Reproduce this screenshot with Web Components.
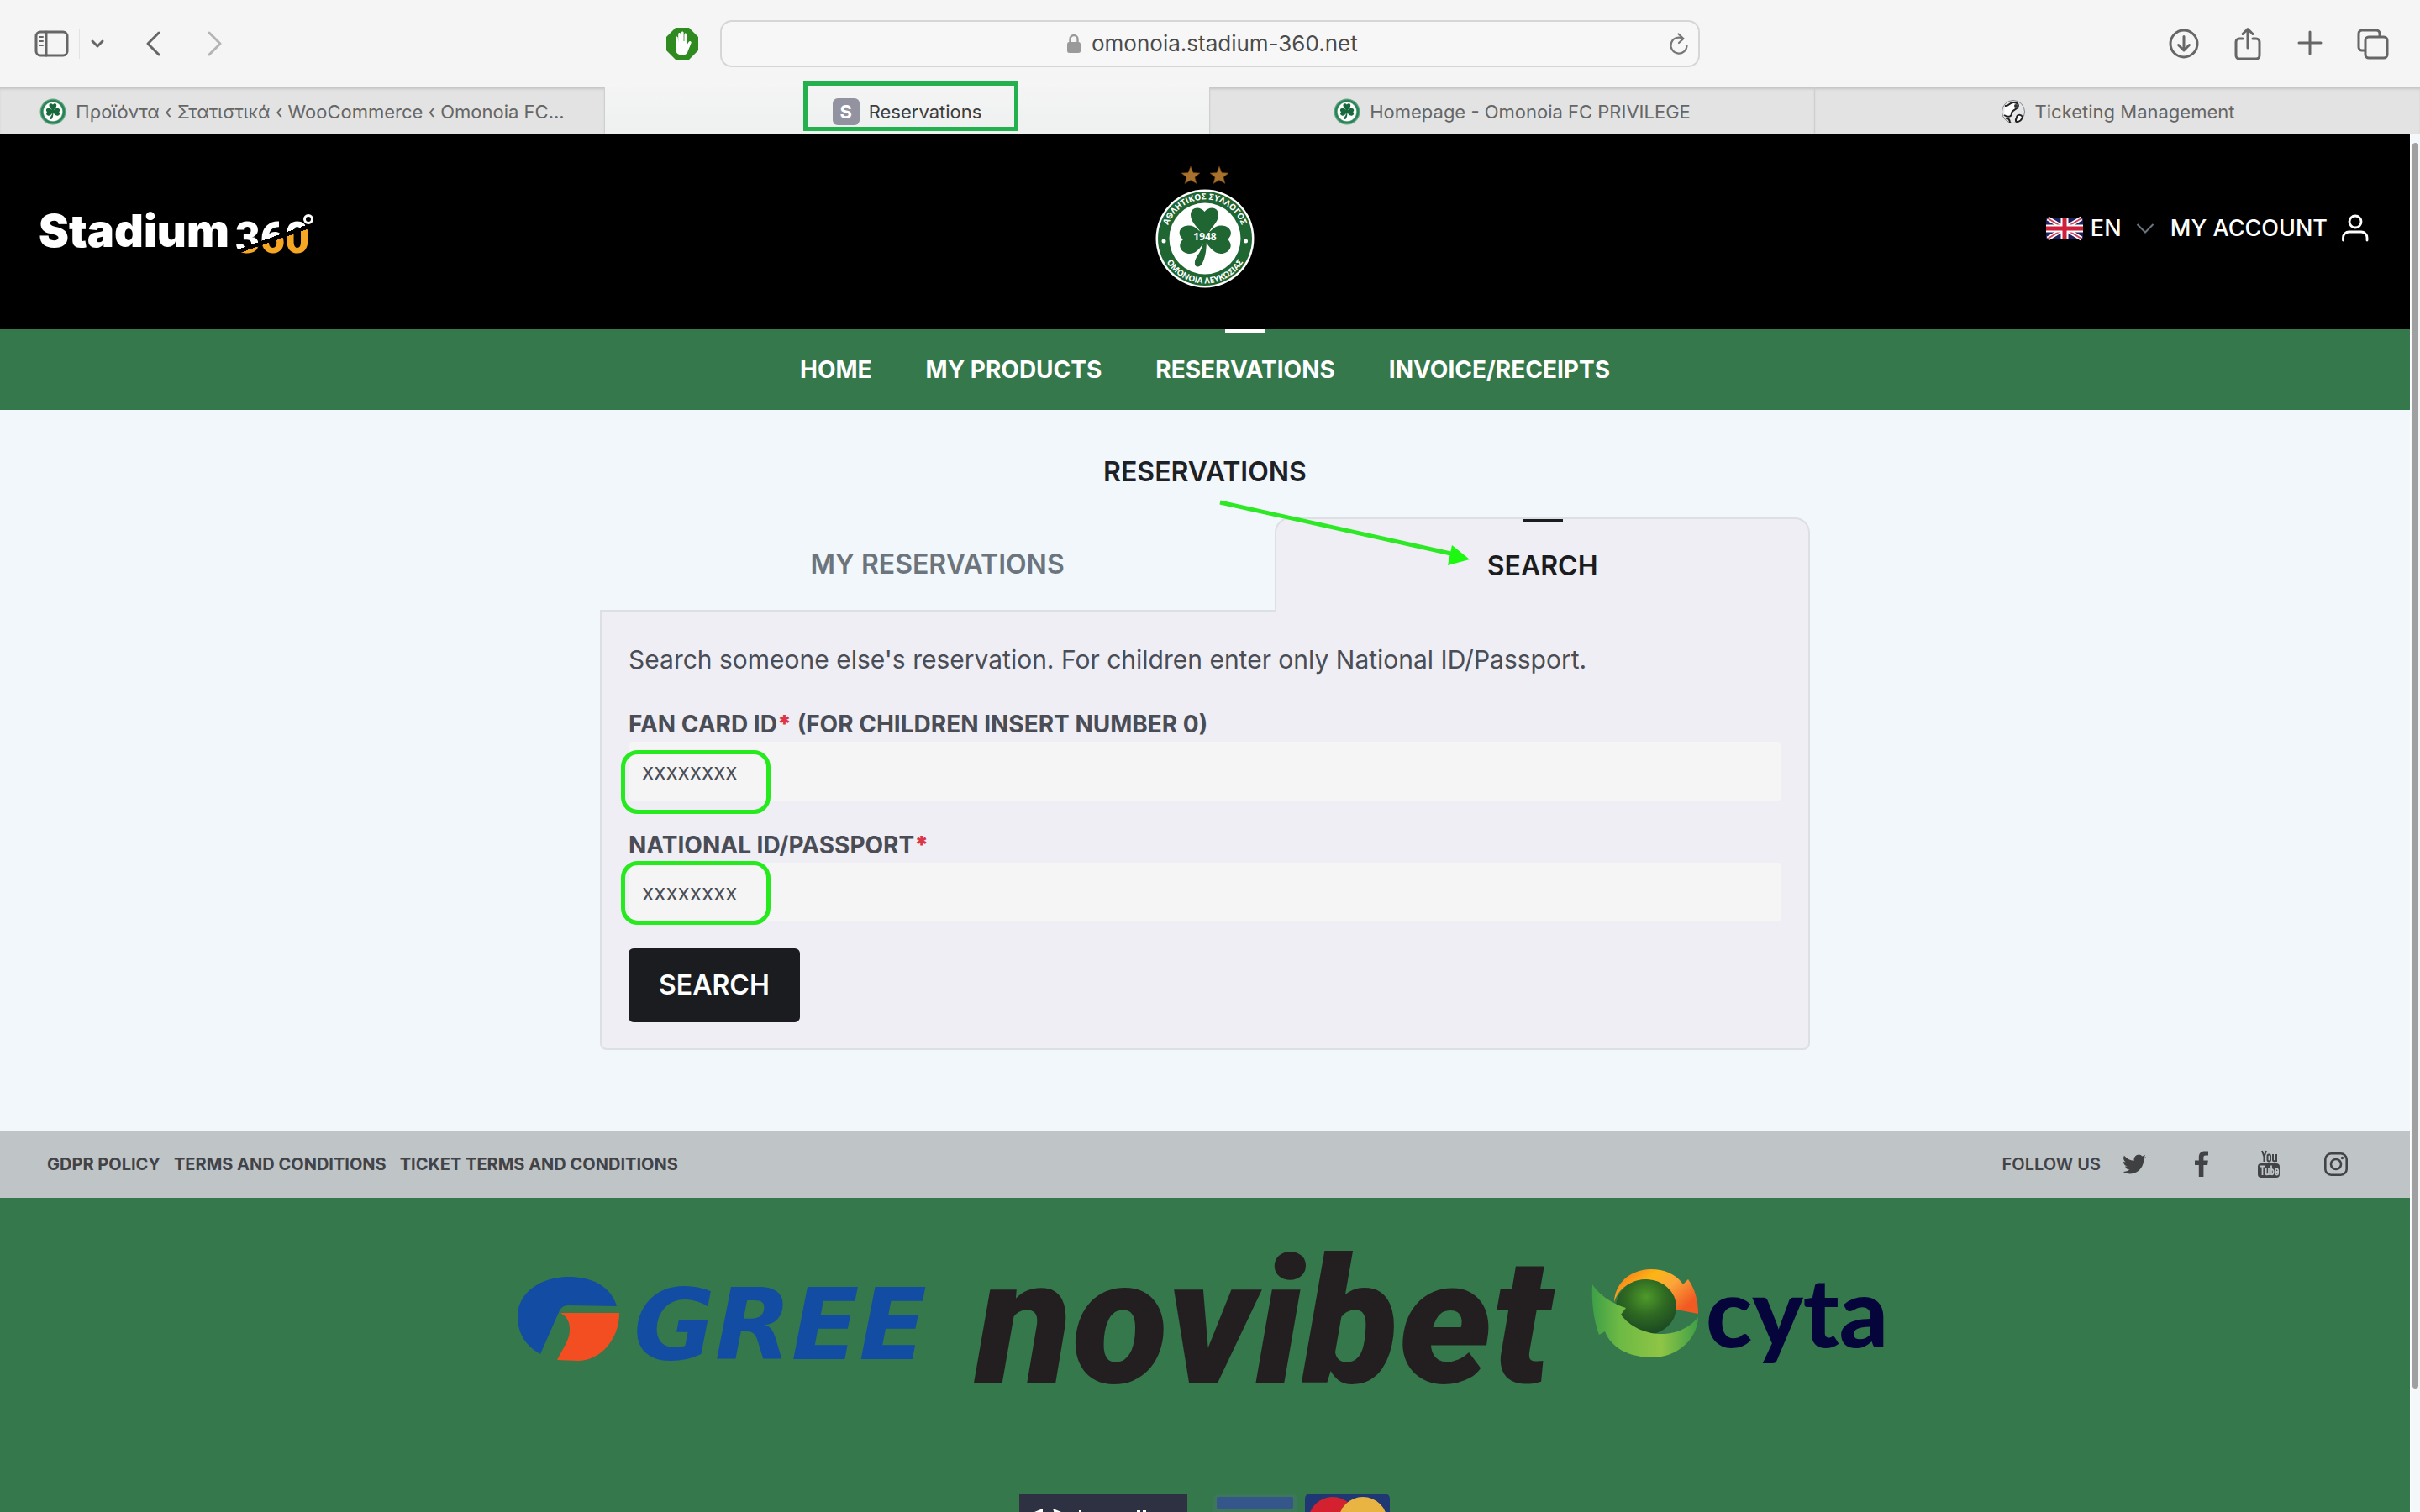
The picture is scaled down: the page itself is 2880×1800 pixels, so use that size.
<!DOCTYPE html>
<html lang="en">
<head>
<meta charset="utf-8">
<title>Reservations</title>
<style>
html, body { margin: 0; height: 100%; }
body { font-family: Inter, "Noto Sans", sans-serif; color: #4a4d55; background: #f1f7fa; overflow: hidden; }
browser-window { height: 100vh; }
</style>
</head>
<body>
<browser-window>
  <browser-toolbar slot="toolbar" address="omonoia.stadium-360.net"></browser-toolbar>
  <browser-tab slot="tabs"><club-crest slot="icon" mini></club-crest>Προϊόντα ‹ Στατιστικά ‹ WooCommerce ‹ Omonoia FC...</browser-tab>
  <browser-tab slot="tabs" active marked><letter-icon slot="icon">S</letter-icon>Reservations</browser-tab>
  <browser-tab slot="tabs"><club-crest slot="icon" mini></club-crest>Homepage - Omonoia FC PRIVILEGE</browser-tab>
  <browser-tab slot="tabs"><ball-icon slot="icon"></ball-icon>Ticketing Management</browser-tab>

  <site-header></site-header>
  <site-nav></site-nav>
  <reservations-page></reservations-page>
  <site-links></site-links>
  <site-footer></site-footer>
</browser-window>

<script>
function define(name, html, setup) {
  const template = document.createElement('template');
  template.innerHTML = html;
  customElements.define(name, class extends HTMLElement {
    constructor() {
      super();
      this.attachShadow({ mode: 'open' }).append(template.content.cloneNode(true));
    }
    connectedCallback() { if (setup) setup(this, this.shadowRoot); }
  });
}

define('browser-window', `
<style>
:host { display: flex; flex-direction: column; }
.tabs { display: grid; grid-auto-flow: column; grid-auto-columns: 1fr; height: 56px; flex: none; }
.view { display: flex; flex: 1; min-height: 0; }
.page { flex: 1; min-width: 0; overflow: hidden; }
.bar { width: 12px; padding: 10px 2px 0; box-sizing: border-box; background: #f5f8fa; border-left: 1px solid #fff; }
.thumb { height: 91%; border-radius: 4px; background: #a0a0a0; }
</style>
<slot name="toolbar"></slot>
<div class="tabs"><slot name="tabs"></slot></div>
<div class="view"><div class="page"><slot></slot></div><div class="bar"><div class="thumb"></div></div></div>`);

define('browser-toolbar', `
<style>
:host { display: grid; grid-template-columns: 1fr 1166px 1fr; align-items: center; height: 104px; flex: none; background: #f5f5f5; }
div { display: flex; align-items: center; }
button { all: unset; display: block; }
svg { display: block; fill: none; stroke: #666; stroke-width: 3; stroke-linecap: round; stroke-linejoin: round; }
.left { padding: 0 26px 0 40px; }
.sep { width: 1px; height: 36px; background: #e2e2e2; margin: 0 12px; }
.spacer { flex: 1; }
.url { height: 56px; box-sizing: border-box; border: 2px solid #d6d6d6; border-radius: 14px; background: #f7f7f7; padding: 0 10px 0 44px; }
.url .mid { flex: 1; justify-content: center; gap: 12px; }
input { font: 26px/36px Inter, sans-serif; color: #4b4b4b; width: 320px; border: 0; padding: 0; background: none; }
.right { justify-content: flex-end; gap: 38px; padding-right: 36px; }
</style>
<div class="left">
  <button aria-label="Sidebar"><svg width="42" height="34" viewBox="0 0 42 34"><rect x="3" y="3" width="37" height="28" rx="5"/><path d="M15 3V31"/><path d="M7 9h4M7 14h4M7 19h4" stroke-width="2"/></svg></button>
  <span class="sep"></span>
  <button aria-label="Tab groups"><svg width="18" height="18" viewBox="0 0 18 18"><path d="M3 6l6 6 6-6"/></svg></button>
  <button aria-label="Back" style="margin-left:46px"><svg width="22" height="34" viewBox="0 0 22 34"><path d="M18 4L5 17L18 30"/></svg></button>
  <button aria-label="Forward" style="margin-left:52px"><svg width="22" height="34" viewBox="0 0 22 34"><path stroke="#b4b4b4" d="M4 4L17 17L4 30"/></svg></button>
  <span class="spacer"></span>
  <button aria-label="Blocker"><svg width="38" height="38" viewBox="0 0 38 38"><path d="M11 0H27L38 11V27L27 38H11L0 27V11Z" fill="#2f8a1f" stroke="none"/><path fill="#fff" stroke="none" d="M11 12c0-2 2.600-2 2.800 0l.4 5V7.500c0-2 2.800-2 2.800 0V16h.8V6c0-2 2.800-2 2.800 0v10h.8V8c0-2 2.600-2 2.600 0v13l2.600-4c1.400-2 3.600-.6 3 1.200L26 27c-1 3.600-3 5.600-7 5.600-5.600 0-8-3-8-8.600z"/></svg></button>
</div>
<div class="url">
  <div class="mid">
    <svg width="18" height="24" viewBox="0 0 18 24"><rect x="1" y="10" width="16" height="13" rx="2.500" fill="#9a9a9a" stroke="none"/><path d="M4.500 11V6.500a4.500 4.500 0 0 1 9 0V11" stroke="#9a9a9a" stroke-width="2.400"/></svg>
    <input aria-label="Address" spellcheck="false">
  </div>
  <button aria-label="Reload"><svg width="26" height="28" viewBox="0 0 26 28"><path stroke="#777" stroke-width="2.200" d="M18 8A9.500 9.500 0 1 0 22.500 16M12.500 2.500L18.500 8L13 13"/></svg></button>
</div>
<div class="right">
  <button aria-label="Downloads"><svg width="38" height="38" viewBox="0 0 38 38"><circle cx="19" cy="19" r="16"/><path d="M19 10.500V27M12.500 20.500L19 27l6.500-6.500"/></svg></button>
  <button aria-label="Share"><svg width="38" height="40" viewBox="0 0 38 40"><path d="M13 14H9a4 4 0 0 0-4 4V34a4 4 0 0 0 4 4H29a4 4 0 0 0 4-4V18a4 4 0 0 0-4-4H25M19 25V3M13 8.500L19 2.500l6 6"/></svg></button>
  <button aria-label="New tab"><svg width="34" height="38" viewBox="0 0 34 38"><path d="M17 5V31M4 18H30"/></svg></button>
  <button aria-label="Tab overview"><svg width="40" height="38" viewBox="0 0 40 38"><path d="M10 27H7a4 4 0 0 1-4-4V7a4 4 0 0 1 4-4H24a4 4 0 0 1 4 4v3"/><rect x="11" y="11" width="26" height="25" rx="4"/></svg></button>
</div>`, (host, root) => { root.querySelector('input').value = host.getAttribute('address'); });

define('browser-tab', `
<style>
:host { display: flex; align-items: center; justify-content: center; position: relative; box-sizing: border-box; background: #e3e3e3; border-right: 1px solid #cfcfcf; box-shadow: inset 0 3px 3px -1px #c4c4c4; color: #666; min-width: 0; }
:host([active]) { background: linear-gradient(#f4f4f4, #eef1f0); box-shadow: none; color: #3c3c3c; }
:host(:last-of-type) { border-right: 0; }
button { all: unset; display: flex; align-items: center; gap: 11px; font-size: 22px; line-height: 28px; white-space: nowrap; padding-top: 2px; }
.mark { display: none; }
:host([marked]) .mark { display: block; position: absolute; left: 236px; right: 227px; top: -7px; bottom: 4px; border: 5px solid #22b14c; }
</style>
<button><slot name="icon"></slot><span><slot></slot></span></button><i class="mark"></i>`);

define('letter-icon', `
<style>:host { display: block; width: 32px; height: 32px; border-radius: 6px; background: #9392a0; color: #fff; font-size: 22px; font-weight: 700; line-height: 32px; text-align: center; }</style><slot></slot>`);

define('ball-icon', `
<style>:host { display: block; } svg { display: block; }</style>
<svg width="30" height="30" viewBox="0 0 30 30"><circle cx="15" cy="15" r="13.500" fill="#e4e6e8" stroke="#7e858c"/><path d="M5 8C10 9 11 3 16 4s6 3 4 6-7 3-7 7-4 5-9 2" fill="#fff" stroke="#222" stroke-width="2"/><path d="M19 22c0-4 5-4 7-1-1 4-4 6-7 6-2-1-1-3 0-5z" fill="#fff" stroke="#222" stroke-width="2"/><path d="M6 23c3-1 5 2 5 5" stroke="#222" stroke-width="2" fill="none"/><circle cx="18" cy="8" r="2" fill="#333"/></svg>`);

const clover = `
<path d="M57 84C52 74 43 69 43 60C43 50 54 49 59.500 56C65 49 76 50 76 60C76 69 67 74 63 84Z"/>
<path d="M60 82C51 80 50 72 40 72.500C30 73 26 82 34 89C26 96 32 106 42 106C51 106 55 97 60 91Z"/>
<path d="M60 82C69 80 70 72 80 72.500C90 73 95 82 87 89C95 96 89 106 79 106C70 106 65 97 60 91Z"/>
<path d="M58.500 86C58 104 49 108 48 116C47 123 54 123 56.500 118C61 110 62 100 62 86Z"/>`;

define('club-crest', `
<style>
:host { display: block; } svg { display: none; }
:host(:not([mini])) .full, :host([mini]) .mini { display: block; }
text { font-family: "Open Sans", sans-serif; font-weight: 700; fill: #fff; }
</style>
<svg class="full" width="120" height="160" viewBox="0 0 120 160" role="img" aria-label="Omonoia">
  <defs><path id="top" d="M13.500 88A46.500 46.500 0 0 1 106.500 88"/><path id="bottom" d="M6.500 88A53.500 53.500 0 0 0 113.500 88"/></defs>
  <g fill="#a8712c" stroke="#5e3d14" stroke-width=".6">
    <path d="M43 2L46 9.500L54 10L48 15L50 22.500L43 18.500L36 22.500L38 15L32 10L40 9.500Z"/>
    <path d="M77 2L80 9.500L88 10L82 15L84 22.500L77 18.500L70 22.500L72 15L66 10L74 9.500Z"/>
  </g>
  <circle cx="60" cy="88" r="58.500" fill="#fff"/><circle cx="60" cy="88" r="56" fill="#1f6633"/><circle cx="60" cy="88" r="42.500" fill="#fff"/>
  <g fill="#1f6633">${clover}</g>
  <text font-size="10" text-anchor="middle"><textPath href="#top" startOffset="50%">ΑΘΛΗΤΙΚΟΣ ΣΥΛΛΟΓΟΣ</textPath></text>
  <text font-size="10" text-anchor="middle"><textPath href="#bottom" startOffset="50%">ΟΜΟΝΟΙΑ ΛΕΥΚΩΣΙΑΣ</textPath></text>
  <circle cx="11" cy="91" r="2.500" fill="#fff"/><circle cx="108.500" cy="91" r="2.500" fill="#fff"/>
  <text x="60" y="90" font-size="12" text-anchor="middle">1948</text>
</svg>
<svg class="mini" width="32" height="32" viewBox="0 28 120 120"><circle cx="60" cy="88" r="58" fill="#5fa783"/><circle cx="60" cy="88" r="49" fill="none" stroke="#2c8257" stroke-width="9"/><circle cx="60" cy="88" r="42" fill="#fff"/><g fill="#17693c">${clover}</g></svg>`);

define('site-header', `
<style>
:host { display: grid; grid-template-columns: 1fr auto 1fr; align-items: center; height: 232px; padding: 0 48px; background: #000; color: #fff; }
svg { display: block; overflow: visible; }
.account { display: flex; justify-content: flex-end; align-items: center; padding-bottom: 8px; font-size: 27px; font-weight: 500; line-height: 40px; }
.lang { display: grid; grid-template-columns: 76px; align-items: center; margin: 0 19px 0 9px; }
.lang > * { grid-area: 1 / 1; }
.lang svg { justify-self: end; pointer-events: none; }
select { appearance: none; font: inherit; color: inherit; background: none; border: 0; padding: 0; width: 76px; }
a { display: flex; align-items: center; gap: 16px; color: inherit; text-decoration: none; }
</style>
<svg width="330" height="64" viewBox="0 0 330 64" role="img" aria-label="Stadium 360">
  <defs><linearGradient id="cut" gradientUnits="userSpaceOnUse" x1="264.700" y1=".8" x2="291.300" y2="76.200"><stop offset=".49" stop-color="#fff"/><stop offset=".49" stop-color="#000"/><stop offset=".55" stop-color="#000"/><stop offset=".55" stop-color="#f5a623"/></linearGradient></defs>
  <text x="-2" y="50" font-family="Inter" font-weight="900" font-size="54" fill="#fff">Stadium</text>
  <text x="232" y="57" font-family="Roboto" font-weight="900" font-size="51" fill="url(#cut)">360</text>
  <circle cx="319" cy="17" r="4.500" fill="none" stroke="#fff" stroke-width="3"/>
</svg>
<club-crest></club-crest>
<div class="account">
  <svg width="44" height="26" viewBox="0 0 44 26"><rect width="44" height="26" fill="#20215f"/><path d="M2 1L42 25M42 1L2 25" stroke="#fff" stroke-width="5"/><path d="M2 1L42 25M42 1L2 25" stroke="#d0405a" stroke-width="2"/><path d="M22 0V26M0 13H44" stroke="#fff" stroke-width="9"/><path d="M22 0V26M0 13H44" stroke="#cf1f3a" stroke-width="5"/></svg>
  <span class="lang"><select aria-label="Language"><option>EN</option></select><svg width="22" height="14" viewBox="0 0 22 14"><path d="M1.500 2L11 11.500L20.500 2" fill="none" stroke="#6c757d" stroke-width="2"/></svg></span>
  <a href="#account">MY ACCOUNT <svg width="34" height="34" viewBox="0 0 34 34" fill="none" stroke="#fff" stroke-width="2.800" stroke-linecap="round"><circle cx="17" cy="9" r="7"/><path d="M2.500 31V28a7 7 0 0 1 7-7H24a7 7 0 0 1 7 7v3"/></svg></a>
</div>`);

define('site-nav', `
<style>
:host { display: block; background: #34784c; }
nav { display: flex; justify-content: center; gap: 64px; font-size: 28px; font-weight: 700; line-height: 96px; }
a { position: relative; color: #fff; text-decoration: none; }
a[aria-current]::before { content: ""; position: absolute; top: 0; left: 50%; margin-left: -24px; width: 48px; height: 4px; background: #fff; }
</style>
<nav><a href="#home">HOME</a><a href="#products">MY PRODUCTS</a><a href="#reservations" aria-current="page">RESERVATIONS</a><a href="#invoices">INVOICE/RECEIPTS</a></nav>`);

define('form-field', `
<style>
:host { display: block; position: relative; }
label { display: block; font-size: 28px; font-weight: 700; line-height: 42px; color: #4a4d55; }
b { color: #dc3545; }
input { display: block; box-sizing: border-box; width: 100%; height: 70px; border: 0; border-radius: 4px; padding: 0 16px; background: #f5f5f5; font: 26px/36px Inter, sans-serif; color: #4a4d55; }
.ring { position: absolute; left: -9px; top: var(--ring-top, 40px); width: 178px; height: 76px; box-sizing: border-box; border: 5px solid #26ea1e; border-radius: 20px; pointer-events: none; }
</style>
<label for="field"><span class="name"></span><b>*</b><span class="hint"></span></label>
<input id="field" value="xxxxxxxx"><i class="ring"></i>`, (host, root) => {
  root.querySelector('.name').textContent = host.getAttribute('name');
  if (host.hasAttribute('hint')) root.querySelector('.hint').textContent = ' ' + host.getAttribute('hint');
});

define('reservations-page', `
<style>
:host { display: block; padding: 54px 0 96px; background: #f1f7fa; }
h1 { margin: 0 0 34px; font-size: 32px; font-weight: 600; line-height: 40px; text-align: center; color: #1e2126; }
section { max-width: 1440px; margin: 0 auto; }
.tabs { display: flex; position: relative; }
.tabs button { all: unset; box-sizing: border-box; flex: 1 1 auto; height: 110px; text-align: center; font-size: 32px; font-weight: 600; color: #6c757d; }
.tabs .on { position: relative; margin-bottom: -2px; height: 112px; border: 2px solid #dcdfe3; border-bottom: 0; border-radius: 18px 18px 0 0; background: #eeeef4; color: #1b1c20; }
.on::before { content: ""; position: absolute; top: 0; left: 50%; margin-left: -24px; width: 48px; height: 4px; background: #1b1c20; }
.arrow { position: absolute; right: 100%; top: -26px; margin-right: -234px; }
.panel { display: flex; flex-direction: column; align-items: stretch; gap: 32px; padding: 33px 32px 31px; border: 2px solid #dcdfe3; border-radius: 0 0 8px 8px; background: #eeeef4; }
p { margin: 0; font-size: 30px; line-height: 48px; color: #4a4d55; }
.go { align-self: flex-start; height: 88px; border: 0; border-radius: 6px; padding: 0 36px; background: #1b1c20; color: #fff; font: 600 32px/40px Inter, sans-serif; }
</style>
<h1>RESERVATIONS</h1>
<section>
  <div class="tabs" role="tablist">
    <button role="tab">MY RESERVATIONS</button>
    <button role="tab" class="on" aria-selected="true">SEARCH
      <svg class="arrow" width="304" height="86" viewBox="0 0 304 86"><path d="M3 6L282 68" stroke="#2ce825" stroke-width="5"/><path d="M300 74L279 57L274 81Z" fill="#1cf80f"/></svg>
    </button>
  </div>
  <form class="panel" onsubmit="return false">
    <p>Search someone else's reservation. For children enter only National ID/Passport.</p>
    <form-field name="FAN CARD ID" hint="(FOR CHILDREN INSERT NUMBER 0)" style="--ring-top: 52px"></form-field>
    <form-field name="NATIONAL ID/PASSPORT"></form-field>
    <button class="go">SEARCH</button>
  </form>
</section>`);

define('site-links', `
<style>
:host { display: flex; align-items: center; height: 80px; padding: 0 48px; background: #bfc4c7; color: #424347; font-size: 20px; font-weight: 600; line-height: 28px; }
nav { flex: 1; display: flex; font-weight: 700; }
a { color: inherit; text-decoration: none; }
nav a { padding: 0 8px; }
.social { width: 80px; display: flex; justify-content: center; }
svg { display: block; }
</style>
<nav><a href="#gdpr">GDPR POLICY</a><a href="#terms">TERMS AND CONDITIONS</a><a href="#tickets">TICKET TERMS AND CONDITIONS</a></nav>
<span>FOLLOW US</span>
<a class="social" href="#twitter" aria-label="Twitter"><svg width="28" height="28" viewBox="0 0 24 24" fill="#3f4042"><path d="M23.950 4.570a10 10 0 0 1-2.820.77 4.960 4.960 0 0 0 2.160-2.720c-.95.560-2 .96-3.130 1.180a4.920 4.920 0 0 0-8.380 4.480C7.690 8.100 4.070 6.130 1.640 3.160a4.820 4.820 0 0 0-.67 2.470c0 1.710.87 3.210 2.190 4.100a4.900 4.900 0 0 1-2.230-.62v.06a4.920 4.920 0 0 0 3.950 4.830 5 5 0 0 1-2.210.08 4.940 4.940 0 0 0 4.600 3.420A9.870 9.870 0 0 1 0 19.540a13.940 13.940 0 0 0 7.550 2.210c9.050 0 14-7.500 14-13.980 0-.21 0-.42-.02-.63a9.940 9.940 0 0 0 2.460-2.550z"/></svg></a>
<a class="social" href="#facebook" aria-label="Facebook"><svg width="18" height="32" viewBox="0 0 18 32" fill="#424347"><path d="M17 .6V5.600H14C11.800 5.600 11.400 6.600 11.400 8.200V11.500H16.800L16.100 17H11.400V31H5.800V17H1V11.500H5.800V7.500C5.800 2.900 8.600.4 12.800.4 14.700.4 16.400.5 17 .6Z"/></svg></a>
<a class="social" href="#youtube" aria-label="YouTube"><svg width="28" height="34" viewBox="0 0 28 34"><g fill="none" stroke="#424347" stroke-width="2"><path d="M6 1L8.500 8V14M11 1L8.500 8"/><rect x="12.500" y="5.500" width="3.500" height="8" rx="1.700"/><path d="M19 5V12C19 14 21.500 13.500 23 12M23 5V14"/></g><rect x="1" y="16" width="26" height="17" rx="4" fill="#424347"/><g fill="none" stroke="#bfc4c7" stroke-width="1.800"><path d="M3.500 19.500H9.500M6.500 19.500V30M10.700 22V28.500C10.700 30 12.500 29.500 14 28.500M14 22V30M17 18.500V30M17 23.500C20.500 21.500 20.500 31 17 29M22.400 26H25.200C25.500 21.500 22 21.500 22.200 24.500V27.500C22.200 30.500 25.200 30 25.200 27.800"/></g></svg></a>
<a class="social" href="#instagram" aria-label="Instagram"><svg width="30" height="30" viewBox="0 0 30 30" fill="none" stroke="#424347" stroke-width="2.600"><rect x="2.300" y="2.300" width="25.400" height="25.400" rx="7"/><circle cx="15" cy="15" r="6"/><circle cx="22.500" cy="7.500" r="1.700" fill="#424347" stroke="none"/></svg></a>`);

define('site-footer', `
<style>
:host { display: block; padding-top: 64px; background: #34784c; height: 400px; }
div { display: flex; justify-content: center; }
.sponsors { gap: 32px; margin-bottom: 128px; }
svg { display: block; overflow: visible; }
</style>
<div class="sponsors">
  <svg width="512" height="160" viewBox="0 0 512 160" role="img" aria-label="Gree">
    <path fill="#134ca3" d="M118 65C112 44 92 30 61 30C26 30 0 50 0 77C0 98 10 112 27 122L50 70Q53 64 60 64Z"/>
    <path fill="#f24e22" d="M51 73H121C121 105 98 130 72 130L47 129C54 115 62 105 62 93C62 85 60 78 51 73Z"/>
    <text x="138" y="128" font-family="DejaVu Sans" font-weight="700" font-style="italic" font-size="118" fill="#134ca3">GREE</text>
  </svg>
  <svg width="692" height="160" viewBox="0 0 692 160"><text x="1" y="156" font-family="Roboto" font-weight="900" font-style="italic" font-size="210" fill="#231f20">novibet</text></svg>
  <svg width="368" height="160" viewBox="0 0 368 160" role="img" aria-label="Cyta">
    <defs>
      <radialGradient id="ball" cx=".5" cy=".32" r=".65"><stop offset="0" stop-color="#4f9a2a"/><stop offset=".5" stop-color="#2f6a22"/><stop offset="1" stop-color="#1c4a22"/></radialGradient>
      <linearGradient id="sun" x1="0" y1="0" x2="1" y2=".6"><stop offset="0" stop-color="#f26a21"/><stop offset=".4" stop-color="#fdb515"/><stop offset=".65" stop-color="#fba63a"/><stop offset="1" stop-color="#f15a22"/></linearGradient>
      <linearGradient id="leaf" x1="0" y1="0" x2="1" y2="0"><stop offset="0" stop-color="#3f9f47"/><stop offset=".25" stop-color="#6cb944"/><stop offset=".65" stop-color="#8fc545"/><stop offset="1" stop-color="#3f9f47"/></linearGradient>
    </defs>
    <path fill="url(#sun)" d="M37 60C38 36 58 21 81 21C98 21 112 28 119 39L125 33C133 44 137 58 137 74L111 69C109 48 92 34 74 33C56 34 42 44 37 60Z"/>
    <ellipse cx="75" cy="66" rx="36" ry="33" fill="url(#ball)"/>
    <path fill="url(#leaf)" d="M11 39C11 39 22 58 51 67L45 75C56 90 76 99 97 98C114 97 128 89 137 78C136 106 110 126 83 126C54 126 33 114 26 95L19 99C12 80 10 58 11 39Z"/>
    <text x="146" y="114" font-family="Lato" font-weight="900" font-size="114" fill="#05053c">cyta</text>
  </svg>
</div>
<div>
  <svg width="442" height="130" viewBox="0 0 442 130" role="img" aria-label="Accepted cards">
    <rect width="200" height="130" fill="#2e3142"/>
    <path d="M18 22L28 18V24ZM40 18L50 22L42 24ZM71 20h3v4h-3zM140 20h4v4h-4zM147 20h4v4h-4z" fill="#fff"/>
    <rect x="231" y="0" width="100" height="64" rx="6" fill="#3b7758"/><rect x="235" y="4" width="91" height="14" rx="2" fill="#34568a"/>
    <rect x="340" width="101" height="64" rx="6" fill="#1f3773"/>
    <circle cx="373" cy="33" r="29" fill="#d3212f"/><circle cx="409" cy="33" r="29" fill="#e9b441"/><path d="M390 14H398M384 19H394" stroke="#e9b441" stroke-width="3"/>
  </svg>
</div>`);
</script>
</body>
</html>
